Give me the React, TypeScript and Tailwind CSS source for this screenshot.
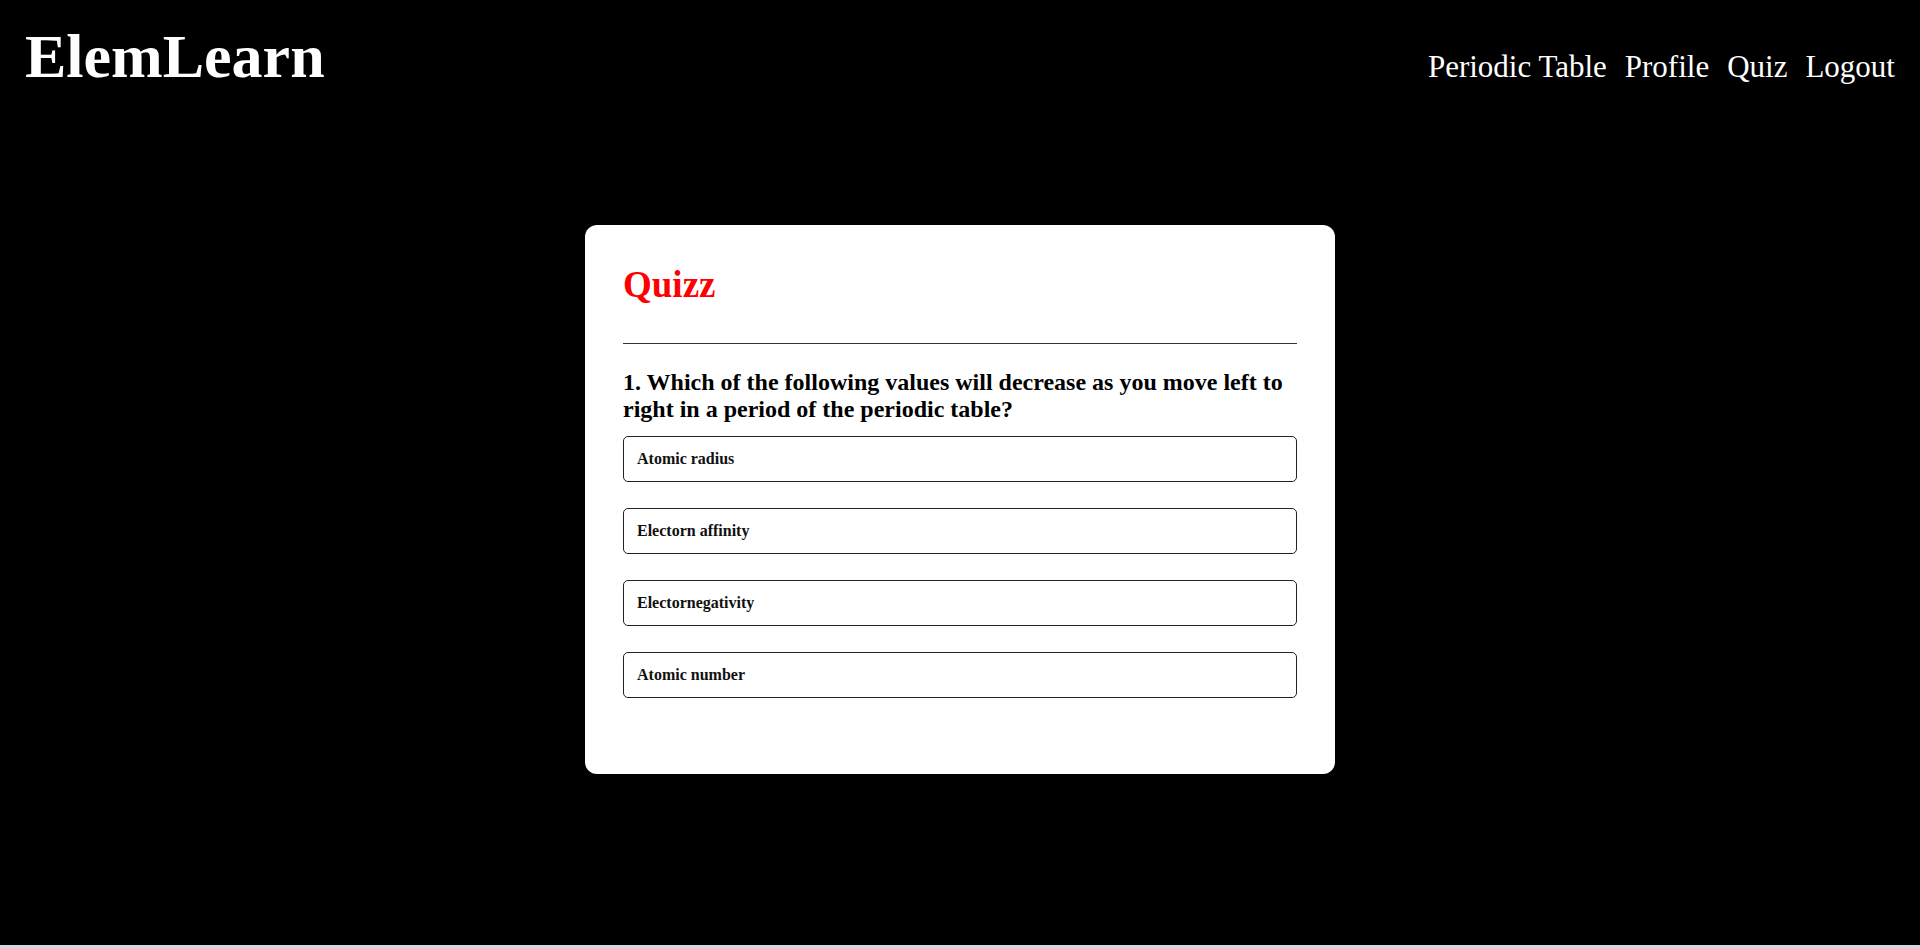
const options = ["Atomic radius", "Electorn affinity", "Electornegativity", "Atomic number"];

const links = ["Periodic Table", "Profile", "Quiz", "Logout"];

export default function App() {
  return (
    <div className="bg-[#d8d5e2] pb-[3px] font-['Liberation_Serif',serif]">
      <div className="h-[945px] bg-black text-white flex flex-col">
        <header className="flex items-baseline justify-between px-[25px] pt-[21px]">
          <h1 className="text-[62px] font-bold leading-[1.15]">ElemLearn</h1>
          <nav className="flex gap-[18px] text-[31px] leading-[1.15]">
            {links.map((l) => (
              <a key={l} href="#" className="text-white">
                {l}
              </a>
            ))}
          </nav>
        </header>

        <main className="flex justify-center pt-[133px]">
          <div className="w-[750px] bg-white text-black rounded-[12px] px-[38px] pt-[39px] pb-[76px]">
            <h2 className="text-[37px] font-bold text-[#ff0000] leading-[1.15]">Quizz</h2>
            <hr className="mt-[36px] border-t border-[#333]" />
            <h3 className="mt-[25px] text-[24px] font-bold leading-[1.15]">
              1. Which of the following values will decrease as you move left to right in a period of the periodic table?
            </h3>
            <div className="mt-[12px] flex flex-col gap-[26px]">
              {options.map((o) => (
                <button
                  key={o}
                  className="h-[46px] w-full text-left px-[13px] border border-[#222] rounded-[5px] text-[16px] font-bold text-[#111]"
                >
                  {o}
                </button>
              ))}
            </div>
          </div>
        </main>
      </div>
    </div>
  );
}
